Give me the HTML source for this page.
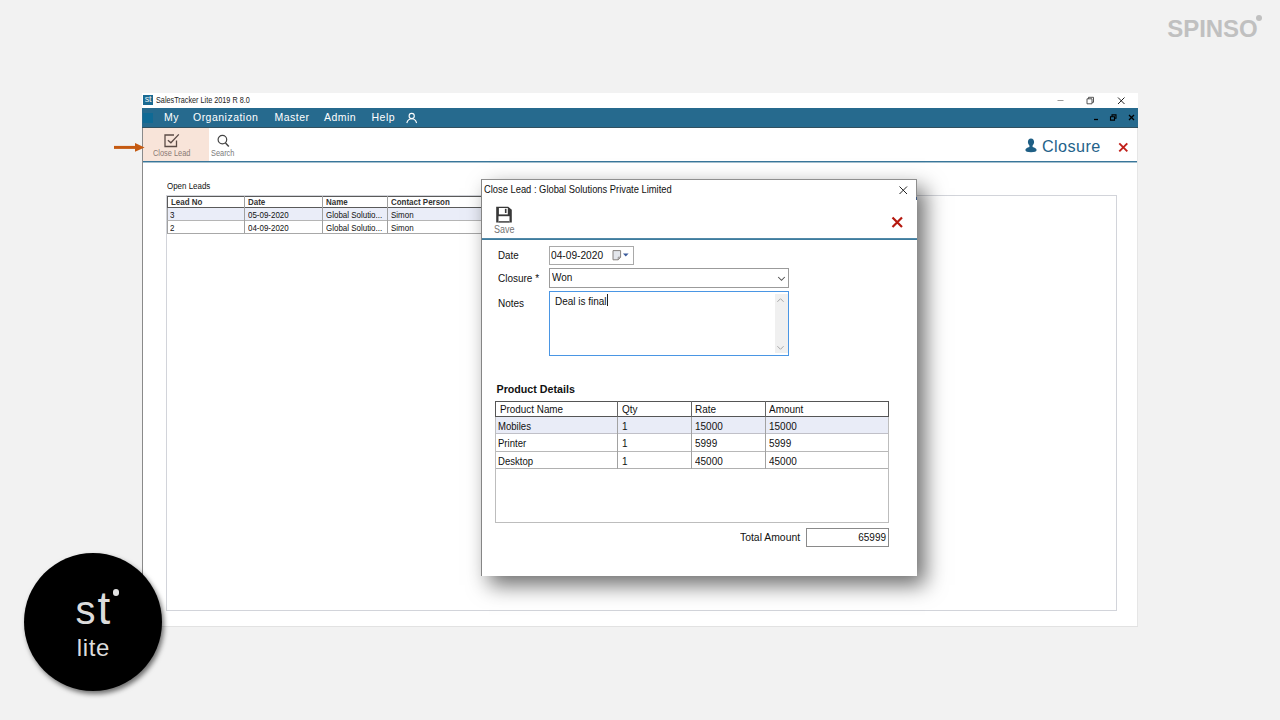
<!DOCTYPE html>
<html><head><meta charset="utf-8">
<style>
*{box-sizing:border-box;margin:0;padding:0}
html,body{width:1280px;height:720px;overflow:hidden;background:#f2f2f2;font-family:"Liberation Sans",sans-serif;}
.a{position:absolute;white-space:nowrap}
#spinso{left:1167.3px;top:16.2px;font-size:24px;line-height:26px;font-weight:bold;color:#c0c0c0;letter-spacing:-.08px}
#spdot{left:1256px;top:15px;width:6px;height:6px;border-radius:50%;background:#c0c0c0}
#win{left:142px;top:93px;width:996px;height:534px;background:#fff;border-left:1px solid #fff;border-bottom:1px solid #e2e2e2}
#title{left:0;top:0;width:995px;height:15px;background:#fff}
#title .ico{left:0px;top:2px;width:10px;height:10px;background:#1a6a92;color:#e8f0f4;font-size:9px;line-height:9px;text-align:center;letter-spacing:-.3px}
#title .t{left:13px;top:3px;font-size:8.6px;line-height:9px;color:#222;transform:scaleX(.845);transform-origin:0 0}
#menu{left:-1px;top:15px;width:996px;height:20px;background:#266a8e;border-bottom:1px solid #31505f}
#menu .sq{left:1.4px;top:4.5px;width:10px;height:10px;background:#0f6a95}
#menu span{position:absolute;top:3px;font-size:10.5px;line-height:13px;color:#fff;white-space:nowrap;letter-spacing:.48px}
#tool{left:0;top:35px;width:994px;height:35px;background:#fff;border-bottom:1px solid #a4c0cf}
#hl{left:0;top:0;width:66px;height:33px;background:#f8e4d9}
.tl{font-size:9px;line-height:10px;color:#7b7b7b;transform:scaleX(.82);transform-origin:0 0}
#inner{left:23px;top:102px;width:951px;height:416px;border:1px solid #d2d4da;background:#fff}
#lbl{left:24px;top:88.5px;font-size:8.4px;line-height:9px;color:#111;transform:scaleX(.95);transform-origin:0 0}
#dlg{left:481px;top:179px;width:436px;height:397px;background:#fff;border-left:1px solid #858585;border-top:1px solid #8f8f8f;box-shadow:8px 9px 20px 0 rgba(0,0,0,.58)}
#logo{left:24px;top:553px;width:138px;height:138px;border-radius:50%;background:#000;box-shadow:2px 3px 5px rgba(0,0,0,.55)}
.g{font-size:8.4px;line-height:9px;color:#111;transform:scaleX(.95);transform-origin:0 0}
.d{font-size:10.5px;line-height:11px;color:#111;transform:scaleX(.95);transform-origin:0 0}
</style></head><body>
<div class="a" id="spinso">SPINSO</div><div class="a" id="spdot"></div>

<div class="a" id="win">
 <div class="a" id="title"><div class="a ico">st</div><div class="a t">SalesTracker Lite 2019 R 8.0</div>
  <svg class="a" style="left:909.2px;top:-.3px" width="85" height="15" viewBox="0 0 85 15">
   <path d="M5.5 7.5h6" stroke="#999" stroke-width="1" fill="none"/>
   <path d="M35 5.8h5v5h-5z M36.5 5.8v-1.5h5v5h-1.5" stroke="#444" stroke-width=".9" fill="none"/>
   <path d="M66 4.5l6.5 6.5M72.5 4.5l-6.5 6.5" stroke="#222" stroke-width="1" fill="none"/>
  </svg>
 </div>
 <div class="a" id="menu"><div class="a sq"></div>
  <span style="left:22px">My</span><span style="left:51px">Organization</span><span style="left:132.5px">Master</span><span style="left:182px">Admin</span><span style="left:229.5px">Help</span>
  <svg class="a" style="left:263px;top:4px" width="13" height="12" viewBox="0 0 13 12"><circle cx="6.7" cy="4" r="2.6" stroke="#fff" stroke-width="1.1" fill="none"/><path d="M1.8 11c.8-3 2.6-4.2 4.9-4.2s4.1 1.2 4.9 4.2" stroke="#fff" stroke-width="1.1" fill="none"/></svg>
  <svg class="a" style="left:948px;top:0px" width="48" height="14" viewBox="0 0 48 14">
   <path d="M4 11.5h4" stroke="#000" stroke-width="1.3"/>
   <path d="M20.5 8.8h4v3.3h-4z M22 8.8v-1.9h4v3.4h-1.5" stroke="#000" stroke-width="1.1" fill="none"/>
   <path d="M39 7l5 5M44 7l-5 5" stroke="#000" stroke-width="1.3"/>
  </svg>
 </div>
 <div class="a" id="tool"><div class="a" id="hl"></div><div class="a" style="left:-1px;top:33px;width:995px;height:1px;background:#39769a"></div>
  <svg class="a" style="left:19.3px;top:4.2px" width="20" height="16" viewBox="0 0 20 16"><path d="M14.5 8.5v6h-11.5v-11.5h9" stroke="#5b4b46" stroke-width="1.3" fill="none"/><path d="M5.9 8.2l3 2.6l7.9-8.4" stroke="#5b4b46" stroke-width="1.3" fill="none"/></svg>
  <div class="a tl" style="left:10px;top:19.5px;color:#8a7a74">Close Lead</div>
  <svg class="a" style="left:73px;top:5px" width="16" height="16" viewBox="0 0 16 16"><circle cx="6.4" cy="6.6" r="4.3" stroke="#444" stroke-width="1.2" fill="none"/><path d="M9.5 9.9l3.3 3.6" stroke="#444" stroke-width="1.5" fill="none"/></svg>
  <div class="a tl" style="left:68px;top:20.1px">Search</div>
  <svg class="a" style="left:881px;top:10px" width="14" height="15" viewBox="0 0 14 15"><path d="M7 .5c2 0 3.1 1.5 3.1 3.6c0 1.5-.8 2.8-1.5 3.5v1.3c2.2.8 4 1.5 4 3.2c0 1.4-2 2.2-5.6 2.2s-5.6-.8-5.6-2.2c0-1.7 1.8-2.4 4-3.2v-1.3c-.7-.7-1.5-2-1.5-3.5c0-2.1 1.1-3.6 3.1-3.6z" fill="#1f5f85"/></svg>
  <div class="a" style="left:899px;top:8.5px;font-size:16.2px;line-height:18px;color:#24628a;letter-spacing:.4px">Closure</div>
  <svg class="a" style="left:974.5px;top:14px" width="11" height="11" viewBox="0 0 11 11"><path d="M1.3 1.3l8 8M9.3 1.3l-8 8" stroke="#c11f19" stroke-width="1.9"/></svg>
 </div>
 <div class="a" style="left:-1px;top:35px;width:1px;height:498px;background:#8a8a8a"></div>
 <div class="a" style="left:994px;top:35px;width:1px;height:498px;background:#e6e6e6"></div>
 <div class="a" id="lbl">Open Leads</div>
 <div class="a" id="inner"></div>
 <!-- leads grid -->
 <div class="a" style="left:24px;top:103px;width:320px;height:12px;border:1px solid #5a5a5a;background:#fff"></div>
 <div class="a" style="left:24px;top:115px;width:320px;height:13px;background:#eaedf8;border-bottom:1px solid #b5b5b5;border-left:1px solid #a0a0a0"></div>
 <div class="a" style="left:24px;top:128px;width:320px;height:13px;border-bottom:1px solid #a8a8a8;border-left:1px solid #a0a0a0"></div>
 <div class="a" style="left:101px;top:103px;width:1px;height:37px;background:#a0a0a0"></div>
 <div class="a" style="left:179px;top:103px;width:1px;height:37px;background:#a0a0a0"></div>
 <div class="a" style="left:244px;top:103px;width:1px;height:37px;background:#a0a0a0"></div>
 <div class="a g" style="left:28px;top:105px;font-weight:bold;color:#333">Lead No</div>
 <div class="a g" style="left:105px;top:105px;font-weight:bold;color:#333">Date</div>
 <div class="a g" style="left:183px;top:105px;font-weight:bold;color:#333">Name</div>
 <div class="a g" style="left:248px;top:105px;font-weight:bold;color:#333">Contact Person</div>
 <div class="a g" style="left:27px;top:117.7px">3</div><div class="a g" style="left:105px;top:117.7px">05-09-2020</div><div class="a g" style="left:183px;top:117.7px">Global Solutio...</div><div class="a g" style="left:248px;top:117.7px">Simon</div>
 <div class="a g" style="left:27px;top:130.7px">2</div><div class="a g" style="left:105px;top:130.7px">04-09-2020</div><div class="a g" style="left:183px;top:130.7px">Global Solutio...</div><div class="a g" style="left:248px;top:130.7px">Simon</div>
</div>

<!-- arrow -->
<svg class="a" style="left:112.6px;top:141px" width="33" height="13" viewBox="0 0 33 13"><path d="M1 6.4h22" stroke="#c55a11" stroke-width="3"/><path d="M22 2.1l9.6 4.3l-9.6 4.4z" fill="#c55a11"/></svg>

<div class="a" id="dlg">
<div class="a" style="left:434px;top:0;width:1px;height:17px;background:#8e8e8e"></div><div class="a" style="left:434px;top:17px;width:1px;height:3px;background:#3a5580"></div>
 <div class="a d" style="left:2px;top:4.3px;font-size:10.2px;transform:scaleX(.918)">Close Lead : Global Solutions Private Limited</div>
 <svg class="a" style="left:416px;top:5px" width="11" height="11" viewBox="0 0 11 11"><path d="M1.5 1.5l7.5 7.5M9 1.5l-7.5 7.5" stroke="#222" stroke-width="1"/></svg>
 <svg class="a" style="left:13px;top:25.5px" width="18" height="18" viewBox="0 0 18 18"><path d="M1.2 .7h12l3.6 3v12.8h-15.6z" fill="#383838"/><rect x="3.9" y="2" width="8.9" height="6.4" fill="#fff"/><rect x="9.9" y="2.8" width="1.6" height="4.2" fill="#383838"/><rect x="3.5" y="10.2" width="11" height="6.3" fill="#fff"/><rect x="3.5" y="15.2" width="11" height="1.3" fill="#383838"/></svg>
 <div class="a tl" style="left:11.5px;top:44.6px;font-size:10px;line-height:10px;transform:scaleX(.9);color:#747474">Save</div>
 <svg class="a" style="left:409px;top:36px" width="13" height="13" viewBox="0 0 13 13"><path d="M1.5 1.5l9.5 9.5M11 1.5l-9.5 9.5" stroke="#b5190f" stroke-width="2.2"/></svg>
 <div class="a" style="left:0;top:58px;width:435px;height:1px;background:#5289a8"></div><div class="a" style="left:0;top:59px;width:435px;height:1px;background:#3f7c9e"></div>

 <div class="a d" style="left:15.5px;top:70px;transform:scaleX(.93)">Date</div>
 <div class="a" style="left:67px;top:66px;width:85px;height:19px;border:1px solid #a9a9a9;background:#fff"></div>
 <div class="a d" style="left:69px;top:70px;transform:scaleX(.97)">04-09-2020</div>
 <svg class="a" style="left:129px;top:69px" width="20" height="13" viewBox="0 0 20 13"><path d="M2 1.6h7.6v6.6l-2.4 2.6h-5.2z" fill="#e3e6ec" stroke="#85807e" stroke-width="1"/><path d="M9.6 8.2h-2.4v2.6" fill="none" stroke="#85807e" stroke-width=".8"/><path d="M12 4.6h5.6l-2.8 2.9z" fill="#3b5b9b"/></svg>

 <div class="a d" style="left:15.8px;top:93px">Closure *</div>
 <div class="a" style="left:67px;top:88px;width:240px;height:20px;border:1px solid #9b9b9b;background:#fff"></div>
 <div class="a d" style="left:70px;top:92px">Won</div>
 <svg class="a" style="left:294.6px;top:96.2px" width="9" height="6" viewBox="0 0 9 6"><path d="M1.2 1l3.3 3.3l3.3-3.3" stroke="#505050" stroke-width="1.05" fill="none"/></svg>

 <div class="a d" style="left:16px;top:117.7px">Notes</div>
 <div class="a" style="left:67px;top:111px;width:240px;height:65px;border:1px solid #4a96e4;background:#fff"></div>
 <div class="a" style="left:292.5px;top:114px;width:13px;height:59px;background:#f0f0f0"></div>
 <svg class="a" style="left:294.2px;top:117.3px" width="9" height="6" viewBox="0 0 9 6"><path d="M1.4 4.8l3.1-3.1l3.1 3.1" stroke="#a8a8a8" stroke-width="1" fill="none"/></svg>
 <svg class="a" style="left:294.2px;top:165px" width="9" height="6" viewBox="0 0 9 6"><path d="M1.4 1.2l3.1 3.1l3.1-3.1" stroke="#a8a8a8" stroke-width="1" fill="none"/></svg>
 <div class="a d" style="left:72.5px;top:115.7px">Deal is final</div>
 <div class="a" style="left:124.5px;top:114.3px;width:1px;height:12px;background:#222"></div>

 <div class="a d" style="left:14.5px;top:204px;font-weight:bold;transform:none;font-size:10.7px">Product Details</div>
 <!-- product grid -->
 <div class="a" style="left:13px;top:221px;width:394px;height:122px;border:1px solid #bdbdbd;background:#fff"></div>
 <div class="a" style="left:13px;top:221px;width:394px;height:16px;border:1px solid #555;background:#fff"></div>
 <div class="a" style="left:14px;top:237px;width:392px;height:17px;background:#e9ecf7;border-bottom:1px solid #c0c0c8"></div>
 <div class="a" style="left:14px;top:254px;width:392px;height:18px;border-bottom:1px solid #b8b8b8"></div>
 <div class="a" style="left:14px;top:272px;width:392px;height:17px;border-bottom:1px solid #b0b0b0"></div>
 <div class="a" style="left:135px;top:221px;width:1px;height:16px;background:#666"></div><div class="a" style="left:135px;top:237px;width:1px;height:52px;background:#a2a2a2"></div>
 <div class="a" style="left:209px;top:221px;width:1px;height:16px;background:#666"></div><div class="a" style="left:209px;top:237px;width:1px;height:52px;background:#a2a2a2"></div>
 <div class="a" style="left:283px;top:221px;width:1px;height:16px;background:#666"></div><div class="a" style="left:283px;top:237px;width:1px;height:52px;background:#a2a2a2"></div>
 <div class="a d" style="left:17.8px;top:224px;transform:scaleX(.94)">Product Name</div><div class="a d" style="left:140px;top:224px">Qty</div><div class="a d" style="left:213px;top:224px">Rate</div><div class="a d" style="left:287px;top:224px">Amount</div>
 <div class="a d" style="left:16.3px;top:241px;transform:scaleX(.91)">Mobiles</div><div class="a d" style="left:140px;top:241px">1</div><div class="a d" style="left:213px;top:241px">15000</div><div class="a d" style="left:287px;top:241px">15000</div>
 <div class="a d" style="left:16.3px;top:258px;transform:scaleX(.91)">Printer</div><div class="a d" style="left:140px;top:258px">1</div><div class="a d" style="left:213px;top:258px">5999</div><div class="a d" style="left:287px;top:258px">5999</div>
 <div class="a d" style="left:16.3px;top:276px;transform:scaleX(.91)">Desktop</div><div class="a d" style="left:140px;top:276px">1</div><div class="a d" style="left:213px;top:276px">45000</div><div class="a d" style="left:287px;top:276px">45000</div>

 <div class="a d" style="left:258px;top:352px;transform:scaleX(.99)">Total Amount</div>
 <div class="a" style="left:324px;top:348px;width:83px;height:19px;border:1px solid #8a8a8a;background:#fff"></div>
 <div class="a d" style="left:324px;width:80px;text-align:right;top:352px;transform-origin:100% 0">65999</div>
</div>

<div class="a" id="logo">
 <div class="a" style="left:51.5px;top:29.8px;font-size:40px;line-height:50px;color:#dcdcdc;letter-spacing:2px">s<span style="font-size:46px;letter-spacing:0">t</span></div>
 <div class="a" style="left:88.5px;top:36px;width:6.6px;height:6.6px;border-radius:50%;background:#e4e4e4"></div>
 <div class="a" style="left:52.8px;top:80px;font-size:24px;line-height:30px;color:#dcdcdc;letter-spacing:.6px">lite</div>
</div>
</body></html>
